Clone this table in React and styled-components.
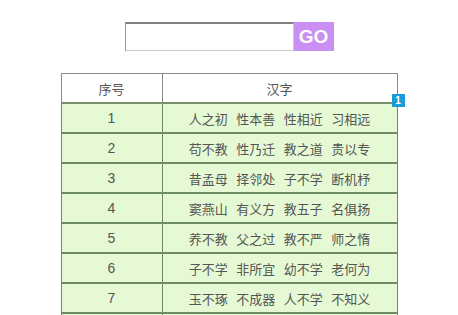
import React from "react";
import styled, { createGlobalStyle } from "styled-components";

const Global = createGlobalStyle`
  html, body { margin: 0; padding: 0; background: #fff; }
  body { font-family: "Liberation Sans", "Noto Sans CJK SC", sans-serif; color: #555; }
`;

const Page = styled.div`
  display: flex;
  flex-direction: column;
  align-items: center;
  padding-top: 22px;
`;

const SearchBar = styled.div`
  display: flex;
  height: 29px;
`;

const SearchInput = styled.input`
  box-sizing: border-box;
  width: 169px;
  height: 29px;
  margin: 0;
  padding: 0 4px;
  border: 1px solid #c8c8c8;
  border-top: 2px solid #808080;
  border-left: 1px solid #9a9a9a;
  outline: none;
  background: #fff;
`;

const GoButton = styled.button`
  box-sizing: border-box;
  width: 40px;
  height: 29px;
  margin: 0;
  padding: 0;
  border: none;
  background: #c98ff2;
  color: #fff;
  font-family: "Liberation Sans", Arial, sans-serif;
  font-weight: bold;
  font-size: 19px;
  line-height: 29px;
`;

const TableWrap = styled.div`
  position: relative;
  margin-top: 22px;
`;

const Table = styled.table`
  border-collapse: separate;
  border-spacing: 0;
  width: 337px;
  font-size: 13px;
  font-family: "Noto Sans CJK SC", "Liberation Sans", sans-serif;
  color: #555;
`;

const Th = styled.th`
  font-weight: normal;
  height: 28px;
  padding: 0;
  background: #fff;
  border-top: 1px solid #8a8a8a;
  border-bottom: 2px solid #7a8f6c;
  border-right: 1px solid #8a8a8a;
  ${(p) => (p.$first ? "border-left: 1px solid #8a8a8a; width: 100px;" : "")}
`;

const Td = styled.td`
  height: 28px;
  padding: 0;
  text-align: center;
  background: #e5fad4;
  border-bottom: 2px solid #6f8c60;
  border-right: 1px solid #6f8c60;
  ${(p) => (p.$first ? "border-left: 1px solid #6f8c60; font-family: 'Liberation Sans', sans-serif; font-size: 14px;" : "")}
`;

const Verse = styled.div`
  display: flex;
  justify-content: center;
  gap: 8.5px;
  white-space: nowrap;
`;

const Badge = styled.div`
  position: absolute;
  left: 331px;
  top: 21px;
  width: 13px;
  height: 13px;
  background: #1b9bd8;
  color: #fff;
  font-family: "Liberation Sans", Arial, sans-serif;
  font-weight: bold;
  font-size: 10px;
  line-height: 13px;
  text-align: center;
`;

const rows = [
  "人之初 性本善 性相近 习相远",
  "苟不教 性乃迁 教之道 贵以专",
  "昔孟母 择邻处 子不学 断机杼",
  "窦燕山 有义方 教五子 名俱扬",
  "养不教 父之过 教不严 师之惰",
  "子不学 非所宜 幼不学 老何为",
  "玉不琢 不成器 人不学 不知义",
  "为人子 方少时 亲师友 习礼仪",
];

export default function App() {
  return (
    <>
      <Global />
      <Page>
        <SearchBar>
          <SearchInput type="text" />
          <GoButton>GO</GoButton>
        </SearchBar>
        <TableWrap>
          <Table>
            <thead>
              <tr>
                <Th $first>序号</Th>
                <Th>汉字</Th>
              </tr>
            </thead>
            <tbody>
              {rows.map((r, i) => (
                <tr key={i}>
                  <Td $first>{i + 1}</Td>
                  <Td>
                    <Verse>
                      {r.split(" ").map((g, j) => (
                        <span key={j}>{g}</span>
                      ))}
                    </Verse>
                  </Td>
                </tr>
              ))}
            </tbody>
          </Table>
          <Badge>1</Badge>
        </TableWrap>
      </Page>
    </>
  );
}
